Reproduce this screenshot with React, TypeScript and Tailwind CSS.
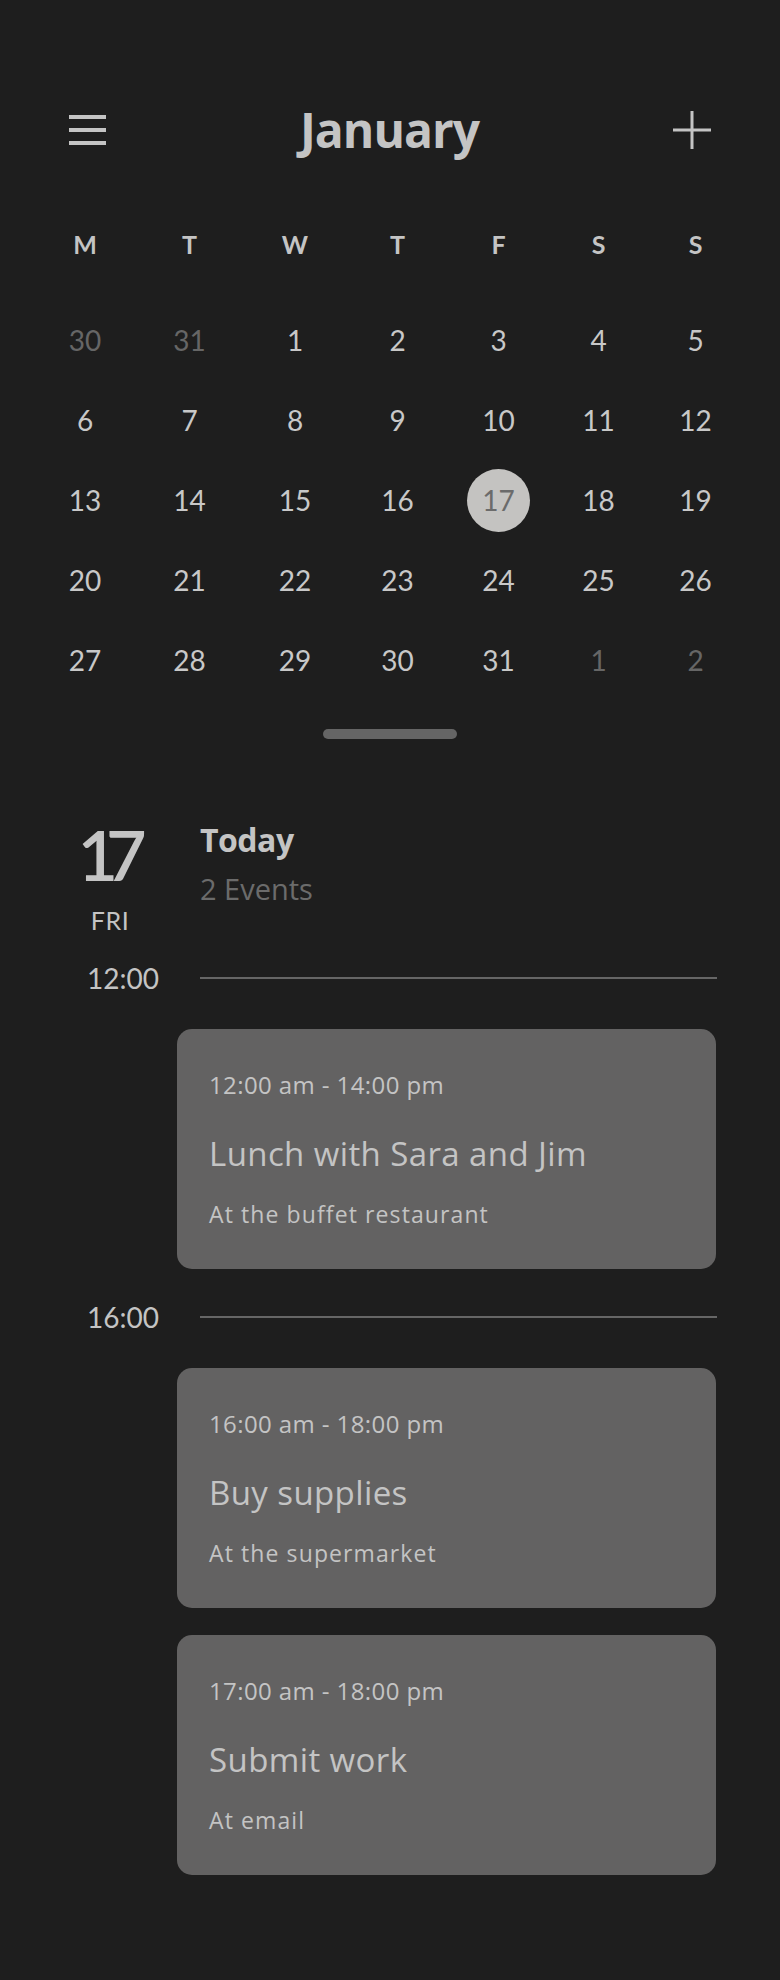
const WEEKDAYS = ['M', 'T', 'W', 'T', 'F', 'S', 'S']

type Day = { n: number; muted?: boolean; selected?: boolean }

const DAYS: Day[] = [
  { n: 30, muted: true },
  { n: 31, muted: true },
  ...Array.from({ length: 31 }, (_, i) => ({ n: i + 1, selected: i + 1 === 17 })),
  { n: 1, muted: true },
  { n: 2, muted: true },
]

const EVENTS = [
  { time: '12:00 am - 14:00 pm', title: 'Lunch with Sara and Jim', place: 'At the buffet restaurant', hour: '12:00' },
  { time: '16:00 am - 18:00 pm', title: 'Buy supplies', place: 'At the supermarket', hour: '16:00' },
  { time: '17:00 am - 18:00 pm', title: 'Submit work', place: 'At email' },
]

// columns are a bit uneven in the mock, keep them as drawn
const COLS = 'grid grid-cols-[102px_107px_104px_101px_101px_99px_95px]'

export default function App() {
  return (
    <div className="min-h-[1980px] bg-[#1e1e1e] text-[#c4c4c4] font-['Open_Sans','Lato',sans-serif]">
      <header className="flex items-center justify-between px-[69px] pt-[100px] h-[160px]">
        <button type="button" className="w-[37px] h-[30px]">
          <svg viewBox="0 0 37 30" width="37" height="30">
            <rect x="0" y="0" width="37" height="4" fill="#c4c4c4" />
            <rect x="0" y="13" width="37" height="4" fill="#c4c4c4" />
            <rect x="0" y="26" width="37" height="4" fill="#c4c4c4" />
          </svg>
        </button>
        <h1 className="text-[48px] leading-none font-bold tracking-[-1px]">January</h1>
        <button type="button" className="w-[38px] h-[38px]">
          <svg viewBox="0 0 38 38" width="38" height="38">
            <path d="M19 0v38M0 19h38" stroke="#c4c4c4" strokeWidth="3" />
          </svg>
        </button>
      </header>

      <div className="px-[34px] font-['Lato',sans-serif]">
        <div className={`${COLS} mt-[64px] h-[40px] items-center`}>
          {WEEKDAYS.map((d, i) => (
            <div key={i} className="text-center text-[25px] leading-none font-bold">
              {d}
            </div>
          ))}
        </div>

        <div className={`${COLS} mt-[36px]`}>
          {DAYS.map((d, i) => (
            <div key={i} className="h-[80px] flex items-center justify-center">
              {d.selected ? (
                <span className="w-[63px] h-[63px] rounded-full bg-[#c4c3c1] text-[#6b6b6b] flex items-center justify-center text-[28px] leading-none">
                  {d.n}
                </span>
              ) : (
                <span className={`text-[28px] leading-none ${d.muted ? 'text-[#666666]' : 'text-[#c8c8c8]'}`}>{d.n}</span>
              )}
            </div>
          ))}
        </div>
      </div>

      <div className="mx-auto mt-[29px] w-[134px] h-[10px] rounded-full bg-[#656565]" />

      <section className="flex mt-[80px]">
        <div className="ml-[60px] w-[100px] flex flex-col items-center font-['Lato',sans-serif]">
          <span className="text-[70px] leading-none font-semibold tracking-[-12px] mr-[8px]">17</span>
          <span className="mt-[19px] text-[25px] leading-none tracking-[0.5px]">FRI</span>
        </div>
        <div className="ml-[40px] mt-[5px]">
          <div className="text-[32px] leading-none font-bold tracking-[-0.5px]">Today</div>
          <div className="mt-[18px] text-[29px] leading-none text-[#6b6b6b]">2 Events</div>
        </div>
      </section>

      <div className="flex flex-col">
        {EVENTS.map((e, i) => (
          <div key={i} className="flex flex-col">
            {e.hour ? (
              <div className={`flex items-center h-[28px] ${i === 0 ? 'mt-[31px]' : 'mt-[34px]'}`}>
                <span className="ml-[87px] w-[113px] text-[28px] leading-none font-['Lato',sans-serif]">{e.hour}</span>
                <div className="w-[517px] h-[2px] bg-[#666666]" />
              </div>
            ) : null}
            <EventCard time={e.time} title={e.title} place={e.place} top={e.hour ? 'mt-[37px]' : 'mt-[27px]'} />
          </div>
        ))}
      </div>
    </div>
  )
}

function EventCard({ time, title, place, top }: { time: string; title: string; place: string; top: string }) {
  return (
    <div className={`${top} ml-[177px] w-[539px] h-[240px] rounded-[15px] bg-[#636262] pl-[32px] pt-[44px] text-[#c4c4c4]`}>
      <div className="text-[24px] leading-none tracking-[0.4px]">{time}</div>
      <div className="mt-[40px] text-[33px] leading-none tracking-[0.4px]">{title}</div>
      <div className="mt-[33px] text-[23px] leading-none tracking-[1.1px]">{place}</div>
    </div>
  )
}
